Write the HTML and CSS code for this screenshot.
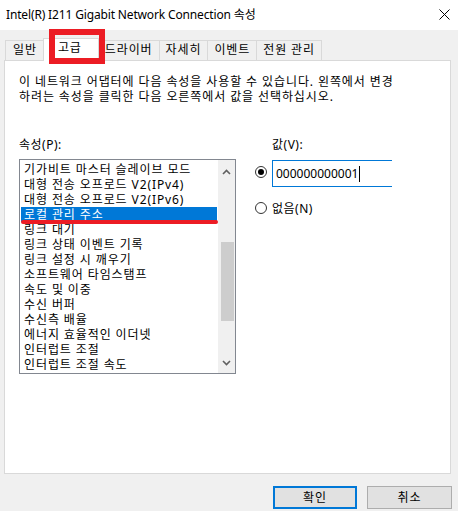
FILE: index.html
```html
<!DOCTYPE html>
<html lang="ko">
<head>
<meta charset="utf-8">
<title>Intel(R) I211 Gigabit Network Connection 속성</title>
<link rel="stylesheet" href="styles.css">
</head>
<body>
<div class="window">
  <div class="titlebar">
    <span class="title">Intel(R) I211 Gigabit Network Connection 속성</span>
    <svg class="close" width="11" height="11" viewBox="0 0 11 11"><path d="M0.5 0.5 L10.5 10.5 M10.5 0.5 L0.5 10.5" stroke="#000" stroke-width="1" fill="none"/></svg>
  </div>
  <div class="tabs">
    <div class="tab first">일반</div>
    <div class="tab sel">고급</div>
    <div class="tab">드라이버</div>
    <div class="tab">자세히</div>
    <div class="tab">이벤트</div>
    <div class="tab">전원 관리</div>
    <div class="mark"></div>
  </div>
  <div class="panel">
    <p class="desc">이 네트워크 어댑터에 다음 속성을 사용할 수 있습니다. 왼쪽에서 변경<br>하려는 속성을 클릭한 다음 오른쪽에서 값을 선택하십시오.</p>
    <div class="cols">
      <div class="left">
        <div class="label">속성(P):</div>
        <div class="listbox">
          <ul class="items">
            <li>기가비트 마스터 슬레이브 모드</li>
            <li>대형 전송 오프로드 V2(IPv4)</li>
            <li>대형 전송 오프로드 V2(IPv6)</li>
            <li class="selected">로컬 관리 주소</li>
            <li>링크 대기</li>
            <li>링크 상태 이벤트 기록</li>
            <li>링크 설정 시 깨우기</li>
            <li>소프트웨어 타임스탬프</li>
            <li>속도 및 이중</li>
            <li>수신 버퍼</li>
            <li>수신측 배율</li>
            <li>에너지 효율적인 이더넷</li>
            <li>인터럽트 조절</li>
            <li>인터럽트 조절 속도</li>
          </ul>
          <div class="scrollbar">
            <div class="arrow up"><svg width="9" height="6" viewBox="0 0 9 6"><path d="M1 5 L4.5 1.5 L8 5" stroke="#606060" stroke-width="1.6" fill="none"/></svg></div>
            <div class="track"><div class="thumb"></div></div>
            <div class="arrow down"><svg width="9" height="6" viewBox="0 0 9 6"><path d="M1 1 L4.5 4.5 L8 1" stroke="#606060" stroke-width="1.6" fill="none"/></svg></div>
          </div>
        </div>
      </div>
      <div class="right">
        <div class="label vlabel">값(V):</div>
        <div class="opt first">
          <span class="radio on"></span>
          <div class="textbox">000000000001<span class="caret"></span></div>
        </div>
        <div class="opt second">
          <span class="radio"></span>
          <span class="optlabel">없음(N)</span>
        </div>
      </div>
    </div>
  </div>
  <div class="buttons">
    <button class="btn default">확인</button>
    <button class="btn">취소</button>
  </div>
</div>
</body>
</html>
```
FILE: styles.css
```css
* { box-sizing: border-box; }
html, body {
  margin: 0;
  padding: 0;
}
body {
  width: 458px;
  height: 511px;
  overflow: hidden;
  background: #f0f0f0;
  font-family: "Noto Sans", "Noto Sans CJK KR", sans-serif;
  font-size: 12px;
  color: #000;
}
.titlebar {
  height: 30px;
  background: #fff;
  display: flex;
  align-items: center;
  justify-content: space-between;
  padding: 0 8px 0 6px;
}
.title {
  line-height: 16px;
  letter-spacing: -0.15px;
}
.close {
  display: block;
  margin-top: -1px;
}
.tabs {
  position: relative;
  z-index: 1;
  display: flex;
  align-items: flex-end;
  height: 23px;
  margin-top: 8px;
  margin-bottom: -1px;
  padding-left: 5px;
}
.tab {
  height: 20px;
  margin-bottom: 1px;
  padding: 0 6px 0 6px;
  border: 1px solid #d9d9d9;
  border-bottom: none;
  background: #f0f0f0;
  line-height: 18px;
  letter-spacing: 0.9px;
  white-space: nowrap;
}
.tab.first { padding-left: 7px; }
.tab + .tab { margin-left: -1px; }
.tab.sel {
  height: 23px;
  margin-bottom: 0;
  padding: 0 16px 0 14px;
  background: #fff;
  line-height: 17px;
  position: relative;
}
.mark {
  position: absolute;
  left: 49px;
  top: -9px;
  width: 56px;
  height: 35px;
  border: 6px solid #ec1c24;
  z-index: 2;
}
.panel {
  height: 414px;
  margin: 0 7px 0 4px;
  border: 1px solid #d9d9d9;
  background: #fff;
  padding: 13px 14px 0 14px;
}
.desc {
  margin: 0;
  line-height: 15px;
  letter-spacing: 0.9px;
  white-space: nowrap;
}
.cols {
  display: flex;
  margin-top: 33px;
}
.left { width: 217px; }
.label {
  line-height: 15px;
  letter-spacing: 0.5px;
}
.listbox {
  margin-top: 7px;
  height: 215px;
  border: 1px solid #828790;
  display: flex;
}
.items {
  flex: 1;
  margin: 0;
  padding: 2px 1px 0 1px;
  list-style: none;
  letter-spacing: 0.9px;
}
.items li {
  height: 15px;
  line-height: 15px;
  padding-left: 3px;
  white-space: nowrap;
}
.items li.selected {
  position: relative;
  background: #0078d7;
  color: #fff;
}
.items li.selected::after {
  content: "";
  position: absolute;
  left: 0;
  right: -1px;
  top: 13px;
  height: 4px;
  border-radius: 2px;
  background: #ec1c24;
}
.scrollbar {
  width: 17px;
  background: #f0f0f0;
  display: flex;
  flex-direction: column;
}
.arrow {
  height: 17px;
  display: flex;
  justify-content: center;
}
.arrow svg { display: block; }
.arrow.up { padding-top: 9px; }
.arrow.down { padding-top: 4px; }
.track { flex: 1; }
.thumb {
  margin: 65px 1px 0 3px;
  height: 79px;
  background: #cdcdcd;
}
.right {
  margin-left: 19px;
  flex: 1;
}
.vlabel { padding-left: 17px; }
.opt {
  display: flex;
  align-items: flex-start;
}
.opt.first { margin-top: 8px; }
.opt.second { margin-top: 14px; }
.radio {
  width: 12px;
  height: 12px;
  border: 1px solid #333;
  border-radius: 50%;
  background: #fff;
  display: flex;
  align-items: center;
  justify-content: center;
  flex: none;
}
.opt.first .radio { margin-top: 6px; }
.opt.second .radio { margin-top: 1px; }
.radio.on::before {
  content: "";
  width: 6px;
  height: 6px;
  border-radius: 50%;
  background: #000;
}
.textbox {
  margin-left: 5px;
  width: 120px;
  height: 27px;
  border: 1px solid #0078d7;
  border-right: none;
  padding-left: 3px;
  line-height: 25px;
  white-space: nowrap;
  display: flex;
  align-items: center;
}
.caret {
  display: inline-block;
  width: 1px;
  height: 16px;
  background: #000;
  margin-left: 1px;
}
.optlabel {
  margin-left: 5px;
  line-height: 15px;
  letter-spacing: 0.5px;
}
.buttons {
  display: flex;
  justify-content: flex-end;
  gap: 10px;
  margin-top: 12px;
  padding-right: 6px;
}
.btn {
  width: 85px;
  height: 23px;
  background: #e1e1e1;
  border: 1px solid #adadad;
  font-family: "Noto Sans", "Noto Sans CJK KR", sans-serif;
  font-size: 12px;
  letter-spacing: 0.9px;
  color: #000;
  padding: 0;
  line-height: 20px;
}
.btn.default {
  width: 84px;
  border: 2px solid #0078d7;
}
```
